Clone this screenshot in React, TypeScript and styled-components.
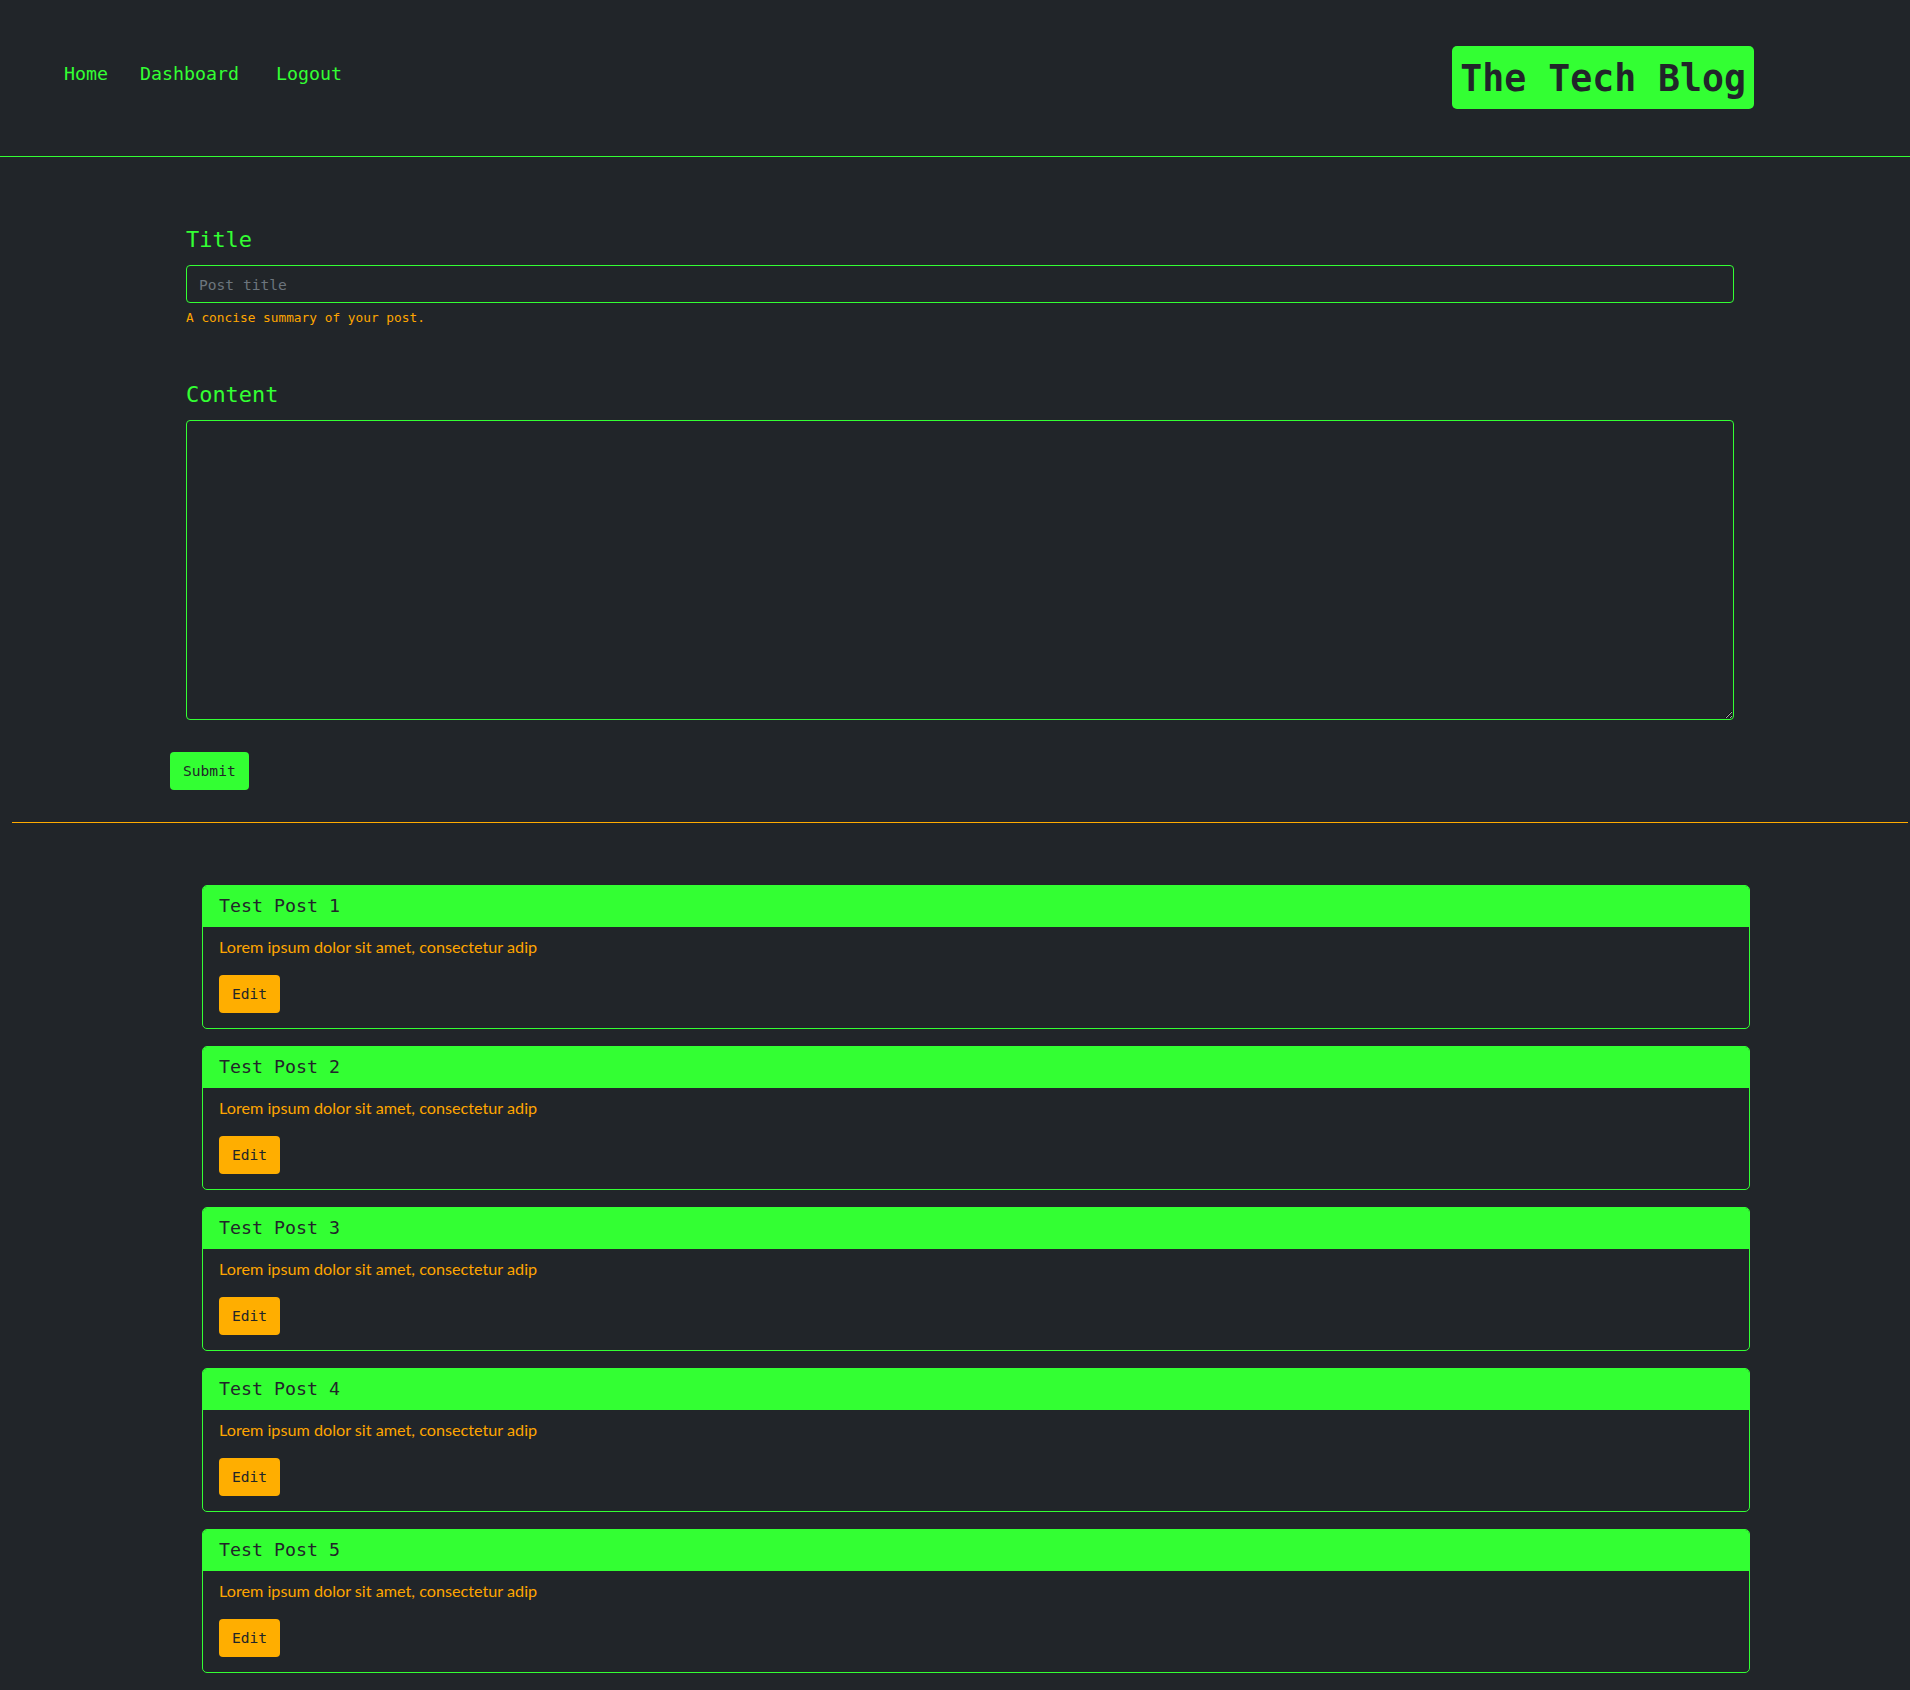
import React from "react";
import styled, { createGlobalStyle } from "styled-components";

const GREEN = "#33ff33";
const ORANGE = "#ffa500";
const BTN_ORANGE = "#ffae00";
const DARK = "#212529";
const MONO = `"DejaVu Sans Mono", "Liberation Mono", monospace`;

const GlobalStyle = createGlobalStyle`
  html, body {
    margin: 0;
    padding: 0;
    background: ${DARK};
  }
  body {
    font-family: ${MONO};
    color: ${GREEN};
  }
  * { box-sizing: border-box; }
`;

const Page = styled.div`
  background: ${DARK};
  padding-bottom: 16px;
`;

const Header = styled.header`
  height: 157px;
  display: flex;
  align-items: flex-start;
  border-bottom: 1px solid ${GREEN};
`;

const Nav = styled.nav`
  display: flex;
  align-items: center;
  margin-top: 62px;
  margin-left: 64px;
`;

const NavLink = styled.a<{ $gap: number }>`
  margin-left: ${(p) => p.$gap}px;
  font-family: ${MONO};
  font-size: 18.27px;
  line-height: 24px;
  color: ${GREEN};
  text-decoration: none;
  cursor: pointer;
`;

const Logo = styled.h1`
  margin: 46px 156px 0 auto;
  padding: 8px 8px 5px;
  background: ${GREEN};
  color: ${DARK};
  border-radius: 5px;
  font-family: ${MONO};
  font-weight: 700;
  font-size: 36.5px;
  line-height: 50px;
  white-space: nowrap;
`;

const FormSection = styled.form`
  padding: 68px 0 0 170px;
  display: flex;
  flex-direction: column;
  align-items: flex-start;
`;

const FieldGroup = styled.div<{ $mb: number }>`
  width: 1564px;
  padding-left: 16px;
  margin-bottom: ${(p) => p.$mb}px;
  display: flex;
  flex-direction: column;
`;

const Label = styled.label`
  font-family: ${MONO};
  font-size: 21.93px;
  line-height: 29px;
  color: ${GREEN};
  margin-bottom: 11px;
`;

const TextInput = styled.input`
  width: 1548px;
  height: 38px;
  padding: 0 12px;
  background: transparent;
  border: 1px solid ${GREEN};
  border-radius: 4px;
  font-family: ${MONO};
  font-size: 14.6px;
  color: #dee2e6;
  outline: none;
  &::placeholder {
    color: #6c757d;
  }
`;

const HelpText = styled.small`
  margin-top: 4px;
  font-family: ${MONO};
  font-size: 12.8px;
  line-height: 21px;
  color: ${ORANGE};
`;

const TextArea = styled.textarea`
  width: 1548px;
  height: 300px;
  padding: 6px 12px;
  background: transparent;
  border: 1px solid ${GREEN};
  border-radius: 4px;
  font-family: ${MONO};
  font-size: 14.6px;
  color: #dee2e6;
  outline: none;
  resize: vertical;
`;

const Button = styled.button<{ $bg: string }>`
  height: 38px;
  padding: 0 13px;
  border: none;
  border-radius: 4px;
  background: ${(p) => p.$bg};
  color: ${DARK};
  font-family: ${MONO};
  font-size: 14.6px;
  line-height: 24px;
  cursor: pointer;
`;

const Divider = styled.hr`
  margin: 32px 2px 0 12px;
  border: none;
  border-top: 1px solid #ffab00;
  height: 0;
`;

const PostList = styled.section`
  margin: 62px 0 0 202px;
  width: 1548px;
  display: flex;
  flex-direction: column;
  gap: 17px;
`;

const Card = styled.article`
  border: 1px solid ${GREEN};
  border-radius: 5px;
  overflow: hidden;
`;

const CardHeader = styled.h5`
  margin: 0;
  height: 41px;
  padding: 8px 16px;
  background: ${GREEN};
  border-bottom: 1px solid ${GREEN};
  color: ${DARK};
  font-family: ${MONO};
  font-weight: 400;
  font-size: 18.27px;
  line-height: 24px;
`;

const CardBody = styled.div`
  padding: 8px 16px 15px;
  display: flex;
  flex-direction: column;
  align-items: flex-start;
`;

const Excerpt = styled.p`
  margin: 0 0 16px;
  font-family: Lato, "Open Sans", sans-serif;
  font-size: 16.2px;
  line-height: 24px;
  color: ${ORANGE};
`;

const posts = [1, 2, 3, 4, 5].map((n) => ({
  id: n,
  title: `Test Post ${n}`,
  excerpt: "Lorem ipsum dolor sit amet, consectetur adip",
}));

export default function App() {
  return (
    <Page>
      <GlobalStyle />
      <Header>
        <Nav>
          <NavLink $gap={0}>Home</NavLink>
          <NavLink $gap={32}>Dashboard</NavLink>
          <NavLink $gap={37}>Logout</NavLink>
        </Nav>
        <Logo>The Tech Blog</Logo>
      </Header>

      <FormSection onSubmit={(e) => e.preventDefault()}>
        <FieldGroup $mb={52}>
          <Label htmlFor="title">Title</Label>
          <TextInput id="title" placeholder="Post title" />
          <HelpText>A concise summary of your post.</HelpText>
        </FieldGroup>
        <FieldGroup $mb={32}>
          <Label htmlFor="content">Content</Label>
          <TextArea id="content" />
        </FieldGroup>
        <Button type="submit" $bg={GREEN}>
          Submit
        </Button>
      </FormSection>

      <Divider />

      <PostList>
        {posts.map((p) => (
          <Card key={p.id}>
            <CardHeader>{p.title}</CardHeader>
            <CardBody>
              <Excerpt>{p.excerpt}</Excerpt>
              <Button $bg={BTN_ORANGE}>Edit</Button>
            </CardBody>
          </Card>
        ))}
      </PostList>
    </Page>
  );
}
